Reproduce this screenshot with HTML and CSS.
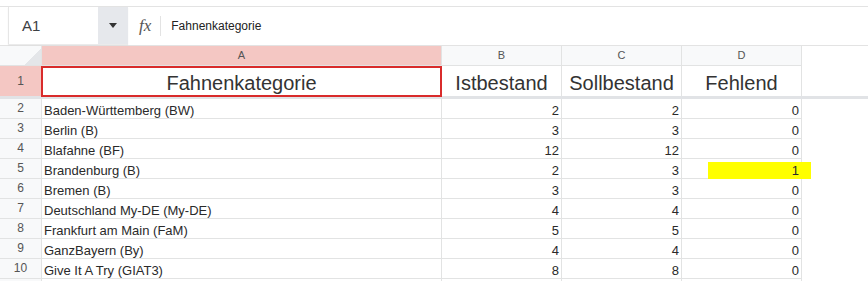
FILE: index.html
```html
<!DOCTYPE html>
<html lang="de">
<head>
  <meta charset="UTF-8">
  <title>Fahnen</title>
  <link rel="stylesheet" href="styles.css">
</head>
<body>
  <div class="formula-bar">
    <div class="name-box">
      <div class="ref">A1</div>
      <div class="drop"><span class="caret"></span></div>
    </div>
    <div class="fx">fx</div>
    <div class="divider"></div>
    <div class="formula-text">Fahnenkategorie</div>
  </div>

  <div class="sheet">
    <div class="row head">
      <div class="cell rh corner"></div>
      <div class="cell col-a selected">A</div>
      <div class="cell col-n">B</div>
      <div class="cell col-n">C</div>
      <div class="cell col-n">D</div>
    </div>
    <div class="row top">
      <div class="cell rh selected">1</div>
      <div class="cell col-a active">Fahnenkategorie</div>
      <div class="cell col-n">Istbestand</div>
      <div class="cell col-n">Sollbestand</div>
      <div class="cell col-n">Fehlend</div>
    </div>
    <div class="row">
      <div class="cell rh">2</div>
      <div class="cell col-a">Baden-Württemberg (BW)</div>
      <div class="cell col-n">2</div>
      <div class="cell col-n">2</div>
      <div class="cell col-n">0</div>
    </div>
    <div class="row">
      <div class="cell rh">3</div>
      <div class="cell col-a">Berlin (B)</div>
      <div class="cell col-n">3</div>
      <div class="cell col-n">3</div>
      <div class="cell col-n">0</div>
    </div>
    <div class="row">
      <div class="cell rh">4</div>
      <div class="cell col-a">Blafahne (BF)</div>
      <div class="cell col-n">12</div>
      <div class="cell col-n">12</div>
      <div class="cell col-n">0</div>
    </div>
    <div class="row">
      <div class="cell rh">5</div>
      <div class="cell col-a">Brandenburg (B)</div>
      <div class="cell col-n">2</div>
      <div class="cell col-n">3</div>
      <div class="cell col-n marked"><span>1</span></div>
    </div>
    <div class="row">
      <div class="cell rh">6</div>
      <div class="cell col-a">Bremen (B)</div>
      <div class="cell col-n">3</div>
      <div class="cell col-n">3</div>
      <div class="cell col-n">0</div>
    </div>
    <div class="row">
      <div class="cell rh">7</div>
      <div class="cell col-a">Deutschland My-DE (My-DE)</div>
      <div class="cell col-n">4</div>
      <div class="cell col-n">4</div>
      <div class="cell col-n">0</div>
    </div>
    <div class="row">
      <div class="cell rh">8</div>
      <div class="cell col-a">Frankfurt am Main (FaM)</div>
      <div class="cell col-n">5</div>
      <div class="cell col-n">5</div>
      <div class="cell col-n">0</div>
    </div>
    <div class="row">
      <div class="cell rh">9</div>
      <div class="cell col-a">GanzBayern (By)</div>
      <div class="cell col-n">4</div>
      <div class="cell col-n">4</div>
      <div class="cell col-n">0</div>
    </div>
    <div class="row">
      <div class="cell rh">10</div>
      <div class="cell col-a">Give It A Try (GIAT3)</div>
      <div class="cell col-n">8</div>
      <div class="cell col-n">8</div>
      <div class="cell col-n">0</div>
    </div>
    <div class="row tail">
      <div class="cell rh"></div>
      <div class="cell col-a"></div>
      <div class="cell col-n"></div>
      <div class="cell col-n"></div>
      <div class="cell col-n"></div>
    </div>
  </div>
</body>
</html>
```

FILE: styles.css
```css
* {
  box-sizing: border-box;
}

body {
  margin: 0;
  font-family: "Liberation Sans", Arial, sans-serif;
  background: #fff;
  color: #222;
  overflow: hidden;
}

/* formula bar */
.formula-bar {
  display: flex;
  align-items: center;
  margin-top: 6px;
  height: 40px;
  border-top: 1px solid #e3e3e3;
  border-bottom: 1px solid #e3e3e3;
}

.name-box {
  display: flex;
  align-self: flex-start;
  margin-left: 8px;
  width: 120px;
  height: 37px;
  border-left: 1px solid #e6e6e6;
  box-shadow: 0 1px 1px rgba(0,0,0,0.08);
}

.name-box .ref {
  flex: 1;
  padding-left: 13px;
  font-size: 15px;
  line-height: 37px;
  color: #3c4043;
}

.name-box .drop {
  width: 30px;
  background: #e6e8ec;
  display: flex;
  align-items: center;
  justify-content: center;
}

.caret {
  width: 0;
  height: 0;
  border-left: 4px solid transparent;
  border-right: 4px solid transparent;
  border-top: 5px solid #333;
}

.fx {
  margin-left: 11px;
  font-family: "Liberation Serif", serif;
  font-style: italic;
  font-size: 17px;
  color: #555;
}

.divider {
  width: 1px;
  height: 20px;
  background: #e3e3e3;
  margin: 0 10px 0 9px;
}

.formula-text {
  font-size: 12px;
  color: #222;
}

/* grid */
.row {
  display: flex;
  height: 20px;
}

.cell {
  position: relative;
  height: 100%;
  display: flex;
  align-items: flex-end;
  padding: 0 2px;
  border-right: 1px solid #e2e3e3;
  border-bottom: 1px solid #e2e3e3;
  font-size: 13px;
  line-height: 15px;
  white-space: nowrap;
  color: #2a2a2a;
}

.rh {
  width: 42px;
  justify-content: center;
  align-items: center;
  background: #f8f9fa;
  font-size: 12px;
  color: #555;
}

.col-a {
  width: 400px;
}

.col-n {
  width: 120px;
  justify-content: flex-end;
}

.head .cell {
  background: #f8f9fa;
  justify-content: center;
  align-items: center;
  font-size: 11px;
  color: #555;
}

.head .corner {
  background: linear-gradient(135deg, #f8f9fa 72%, #e4e6e9 72%);
}

.row .selected,
.head .selected {
  background: #f4c7c3;
}

.row.top {
  height: 33px;
  border-bottom: 3px solid #e1e3e6;
}

.top .cell {
  border-bottom: none;
  justify-content: center;
  font-size: 20px;
  line-height: 23px;
  padding-bottom: 1px;
  color: #333;
}

.top .rh {
  font-size: 12px;
  line-height: 15px;
  padding-bottom: 0;
  color: #555;
}

.active::after {
  content: "";
  position: absolute;
  top: 0;
  left: -1px;
  right: -1px;
  bottom: -1px;
  border: 2px solid #d92b2b;
}

.marked::before {
  content: "";
  position: absolute;
  top: 3px;
  left: 26px;
  width: 103px;
  height: 17px;
  background: #ffff00;
  z-index: 0;
}

.marked span {
  position: relative;
  z-index: 1;
}
```
